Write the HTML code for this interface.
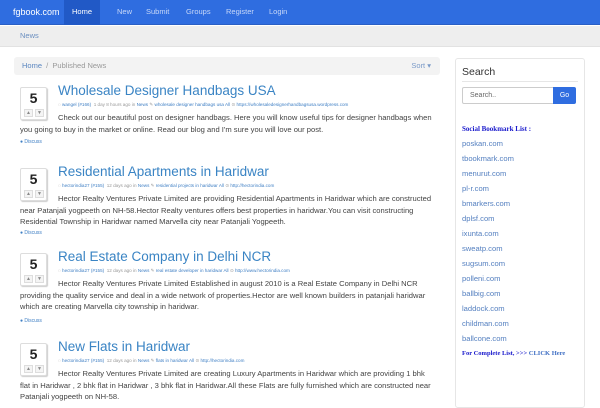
<!DOCTYPE html>
<html><head><meta charset="utf-8"><style>
*{margin:0;padding:0;box-sizing:border-box}
body{width:600px;height:400px;overflow:hidden;background:#fff;font-family:"Liberation Sans","DejaVu Sans",sans-serif;position:relative;color:#444}
.nav{position:absolute;left:0;top:0;width:600px;height:25px;background:#2f6de0;border-bottom:1px solid #2a5fc4}
.nav span{position:absolute;top:0;height:25px;line-height:24px;font-size:7.5px;color:#c8d8f8}
.brand{font-size:9px!important;color:#fff!important;left:13px}
.active{background:#2159c6;color:#fff!important;padding:0 8px}
.sub{position:absolute;top:26px;left:0;width:600px;height:21px;background:#eeeeee;border-bottom:1px solid #e2e2e2}
.sub span{position:absolute;left:20px;top:5px;font-size:7.5px;color:#6b8fc0}
.bc{position:absolute;left:14px;top:57px;width:426px;height:18px;background:#f3f3f3;border-radius:3px;font-size:7.5px;line-height:18px;padding-left:8px;color:#999}
.bc a{color:#5a86c0}
.bc .sort{position:absolute;right:9px;top:0;color:#7a9ac8}
.side{position:absolute;left:455px;top:58px;width:130px;height:350px;border:1px solid #e6e6e6;border-radius:3px}
.post{position:absolute;left:20px;width:410px}
.vote{position:absolute;left:0;top:0;width:27px;height:33px;border:1px solid #ddd;border-radius:2px;box-shadow:1px 1px 1px #ccc;background:#fff}
.vote b{display:block;text-align:center;font-size:14px;color:#222;line-height:18px;margin-top:1px}
.vote i{position:absolute;top:21px;width:9px;height:8px;border:1px solid #ddd;background:#f4f4f4;font-size:5px;line-height:7px;text-align:center;font-style:normal;color:#888}
.title{position:absolute;left:38px;top:-4px;font-size:13.5px;color:#3a84c4;white-space:nowrap}
.meta{position:absolute;left:38px;top:15px;font-size:4.6px;color:#999;white-space:nowrap}
.meta a{color:#3f7fc4}
.txt{position:absolute;left:0;top:25px;width:412px;font-size:7.6px;line-height:11.5px;color:#444;text-indent:38px}
.disc{position:absolute;left:0;font-size:5px;color:#3f7fc4}
.l{position:absolute;left:6px;font-size:7.6px;color:#5580c0}
</style></head><body>
<div class="nav"><span class="brand">fgbook.com</span><span class="active" style="left:64px">Home</span><span style="left:117px">New</span><span style="left:146px">Submit</span><span style="left:186px">Groups</span><span style="left:226px">Register</span><span style="left:269px">Login</span></div>
<div class="sub"><span>News</span></div>
<div class="bc"><a>Home</a> &nbsp;/&nbsp; Published News<span class="sort">Sort ▾</span></div>

<div class="post" style="top:87px"><div class="vote"><b>5</b><i style="left:3px">▲</i><i style="left:14px">▼</i></div>
<div class="title">Wholesale Designer Handbags USA</div>
<div class="meta">◌ <a>wangel (#166)</a> &nbsp;1 day 8 hours ago in <a>News</a> ✎ <a>wholesale designer handbags usa All</a> ⊙ <a>https://wholesaledesignerhandbagsusa.wordpress.com</a></div>
<div class="txt">Check out our beautiful post on designer handbags. Here you will know useful tips for designer handbags when you going to buy in the market or online. Read our blog and I'm sure you will love our post.</div>
<div class="disc" style="top:52px">● Discuss</div></div>

<div class="post" style="top:168px"><div class="vote"><b>5</b><i style="left:3px">▲</i><i style="left:14px">▼</i></div>
<div class="title">Residential Apartments in Haridwar</div>
<div class="meta">◌ <a>hectorindia27 (#155)</a> &nbsp;12 days ago in <a>News</a> ✎ <a>residential projects in haridwar All</a> ⊙ <a>http://hectorindia.com</a></div>
<div class="txt">Hector Realty Ventures Private Limited are providing Residential Apartments in Haridwar which are constructed near Patanjali yogpeeth on NH-58.Hector Realty ventures offers best properties in haridwar.You can visit constructing Residential Township in Haridwar named Marvella city near Patanjali Yogpeeth.</div>
<div class="disc" style="top:62px">● Discuss</div></div>

<div class="post" style="top:253px"><div class="vote"><b>5</b><i style="left:3px">▲</i><i style="left:14px">▼</i></div>
<div class="title">Real Estate Company in Delhi NCR</div>
<div class="meta">◌ <a>hectorindia27 (#155)</a> &nbsp;12 days ago in <a>News</a> ✎ <a>real estate developer in haridwar All</a> ⊙ <a>http://www.hectorindia.com</a></div>
<div class="txt">Hector Realty Ventures Private Limited Established in august 2010 is a Real Estate Company in Delhi NCR providing the quality service and deal in a wide network of properties.Hector are well known builders in patanjali haridwar which are creating Marvella city township in haridwar.</div>
<div class="disc" style="top:65px">● Discuss</div></div>

<div class="post" style="top:343px"><div class="vote"><b>5</b><i style="left:3px">▲</i><i style="left:14px">▼</i></div>
<div class="title">New Flats in Haridwar</div>
<div class="meta">◌ <a>hectorindia27 (#155)</a> &nbsp;12 days ago in <a>News</a> ✎ <a>flats in haridwar All</a> ⊙ <a>http://hectorindia.com</a></div>
<div class="txt">Hector Realty Ventures Private Limited are creating Luxury Apartments in Haridwar which are providing 1 bhk flat in Haridwar , 2 bhk flat in Haridwar , 3 bhk flat in Haridwar.All these Flats are fully furnished which are constructed near Patanjali yogpeeth on NH-58.</div></div>

<div class="side">
<div style="position:absolute;left:6px;top:7px;font-size:10.5px;color:#333">Search</div>
<div style="position:absolute;left:6px;top:22px;width:116px;height:1px;background:#e6e6e6"></div>
<div style="position:absolute;left:6px;top:28px;width:92px;height:17px;border:1px solid #ccc;border-radius:2px 0 0 2px;font-size:7px;line-height:15px;padding-left:7px;color:#666">Search..</div>
<div style="position:absolute;left:97px;top:28px;width:23px;height:17px;background:#2f6de0;border-radius:0 2px 2px 0;font-size:7px;line-height:17px;text-align:center;color:#fff">Go</div>
<div style="position:absolute;left:6px;top:66px;font-family:'Liberation Serif',serif;font-weight:bold;font-size:7px;color:#1a1acc">Social Bookmark List :</div>
<div class="l" style="top:80px">poskan.com</div>
<div class="l" style="top:95px">tbookmark.com</div>
<div class="l" style="top:110px">menurut.com</div>
<div class="l" style="top:125px">pl-r.com</div>
<div class="l" style="top:140px">bmarkers.com</div>
<div class="l" style="top:155px">dplsf.com</div>
<div class="l" style="top:170px">ixunta.com</div>
<div class="l" style="top:185px">sweatp.com</div>
<div class="l" style="top:200px">sugsum.com</div>
<div class="l" style="top:215px">polleni.com</div>
<div class="l" style="top:230px">ballbig.com</div>
<div class="l" style="top:245px">laddock.com</div>
<div class="l" style="top:260px">childman.com</div>
<div class="l" style="top:275px">ballcone.com</div>
<div style="position:absolute;left:6px;top:291px;font-family:'Liberation Serif',serif;font-weight:bold;font-size:6.5px;color:#1a1acc;white-space:nowrap">For Complete List, &gt;&gt;&gt; <span style="color:#3f6fc4">CLICK Here</span></div>
</div>
</body></html>
